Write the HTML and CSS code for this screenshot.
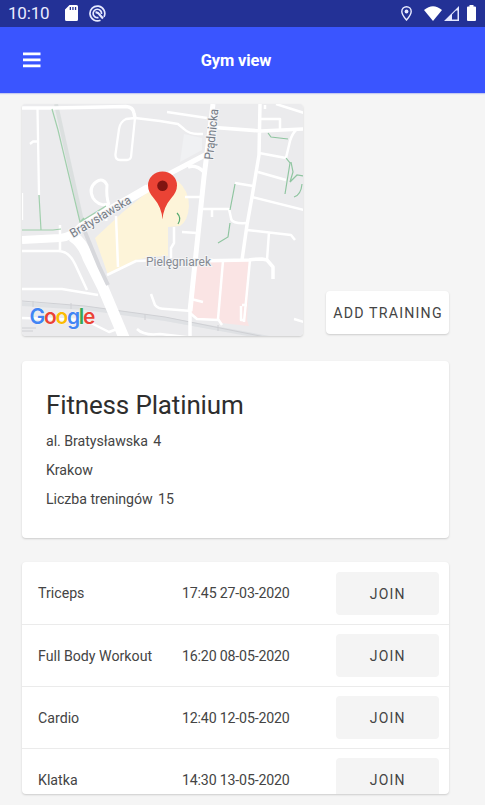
FILE: index.html
```html
<!DOCTYPE html>
<html lang="pl">
<head>
<meta charset="utf-8">
<title>Gym view</title>
<link rel="stylesheet" href="styles.css">
</head>
<body>
<div class="status">
  <span class="clock">10:10</span>
  <svg class="sd" width="13" height="16" viewBox="0 0 13 16"><path fill="#fff" fill-rule="evenodd" d="M4.500 0H11.500Q13 0 13 1.500V14.500Q13 16 11.500 16H1.500Q0 16 0 14.500V4.500ZM4.700 2V5H6V2ZM7.300 2V5H8.600V2ZM9.900 2V5H11.200V2Z"/></svg>
  <svg class="sync" width="17" height="17" viewBox="0 0 17 17" fill="none" stroke="#e6e9ff"><path stroke-width="1.700" d="M11.500 15.200A7.400 7.400 0 1 1 15 11.800"/><path stroke-width="1.700" d="M9.500 12.500A4.200 4.200 0 1 1 12.500 9"/><path stroke-width="2.200" d="M6.500 7.500Q9 7 10.500 9.500L14 13.500"/></svg>
  <span class="spacer"></span>
  <svg class="loc" width="11" height="15" viewBox="0 0 11 15"><path fill="none" stroke="#e9ebff" stroke-width="1.400" d="M5.500 14C2.500 10.500.8 8 .8 5.400a4.700 4.700 0 0 1 9.400 0C10.200 8 8.500 10.500 5.500 14Z"/><circle cx="5.500" cy="5.500" r="1.900" fill="#e9ebff"/></svg>
  <svg class="wifi" width="18" height="15" viewBox="0 0 18 15"><path fill="#fff" d="M0 4Q9-3.600 18 4L9 15Z"/></svg>
  <svg class="signal" width="15" height="15" viewBox="0 0 15 15"><path fill="#e5e8ff" fill-rule="evenodd" d="M15 0V15H0ZM13.500 4.500H12L8 8.500V13.500H13.500Z"/></svg>
  <svg class="battery" width="9" height="16" viewBox="0 0 9 16"><path fill="#fff" d="M2.500 0H6.500V1.500H8Q9 1.500 9 2.500V15Q9 16 8 16H1Q0 16 0 15V2.500Q0 1.500 1 1.500H2.500Z"/></svg>
</div>
<header class="bar">
  <svg class="menu" width="18" height="16" viewBox="0 0 18 16"><path fill="#fff" d="M0 .5H17.500V3.200H0ZM0 6.500H17.500V9.200H0ZM0 12.500H17.500V15.200H0Z"/></svg>
  <h1>Gym view</h1>
</header>
<main>
  <section class="top">
    <svg class="map" width="281" height="232" viewBox="22 104 281 232">
      <rect x="22" y="104" width="282" height="233" fill="#ebebed"/>
      <path fill="#f0f1f3" d="M184 134L202 138 202 150 180 162Z"/>
      <path fill="#fdf4d9" d="M95 238L123 212 150 190 178 181Q189 191 189 206 188 221 180 226L168 227V256L150 257 136 260 108 275Z"/>
      <path fill="#fae4e4" d="M195 261L250 260 247 320 249 326 221 323 217 319 197 319 191 312Z"/>
      <path fill="none" stroke="#dfe1e4" stroke-width="4" d="M22 304L85 308 165 319 220 329 275 339"/>
      <path fill="none" stroke="#cfd0d4" stroke-width="1" d="M22 301L85 306 165 317 220 328 265 337M33 301V307M71 303V309M145 314V320M218 325V331M22 328H36M22 331H33"/>
      <path fill="none" stroke="#dbdfdf" stroke-width="4" d="M56 104L82 221"/>
      <g fill="none" stroke="#fff" stroke-linejoin="round">
        <path stroke-width="3.500" d="M22 108H54L126 106.500Q133 107 134 113L135 118"/>
        <path stroke-width="2.300" d="M135 118L131 157Q130 160 127 160H120Q115 160 115.500 154L119 129Q120 122 126 119L135 118 160 121 178 124 184 129Q189 134 198 134H203M37.500 109L39 195M30 144L33 141.500H38M22 193V220"/>
        <path stroke-width="3" d="M106 221V203M109 205Q98 206 93 198 88 188 96 182 103 177 107 185 106 197 109 205"/>
        <path stroke-width="8" d="M22 240L60 238Q72 237 82 226L148 188"/>
        <path stroke-width="5" d="M145 189L165 176 205 155"/>
        <path stroke-width="11" d="M72 236Q83 243 88 258L103 288 125 340"/>
        <path stroke-width="2.500" d="M116 216L118 267M107 275L136 261 160 260M60 225V250M22 251H58Q69 251 75 264L87 290M22 289H62L98 295M22 318L85 320 109 332 117 329M151 294L155 305Q158 309 166 309L191 311M137 329Q144 336 160 334L195 338M174 227V243L171 248V258M182 232L197 233"/>
        <path stroke-width="5" d="M213 104L208 145 204 177 199 225 190 311"/>
        <path stroke-width="3.500" d="M188 167Q196 164 204 172M208 127L261 131 304 129M260 104L259 155 252 197 247 225 242 260M190 311V338M193 261L249 260Q255 259 262 259L267 260 273 267V279"/>
        <path stroke-width="2.500" d="M167 112L207 118M260 119H280V131M265 105V109M276 104L304 113M259 153L286 158 290 141Q292 134 296 130M258 172L286 180M235 183L253 186M252 197L304 210M185 197H202M202 209H229L231 218Q231 224 247 223M212 210V217M247 230L291 235 295 240M269 232L267 260M223 261L218 319 222 325M250 260L244 322M242 305H247M241 306V320H245M191 299L203 302M190 313L197 319 218 320M294 319L304 322"/>
      </g>
      <g fill="none" stroke="#a0cfac" stroke-width="1.200">
        <path d="M52 109L58 130 80 222 106 206M39 195L41 230M22 230H53L61 229M80 222L84 218"/>
        <path stroke="#8fc5a0" d="M235 184L230 210M268 133L271 137 288 139M230 223L228 237 218 243M286 158L290 163 285 194M291 162L293 172 290 182 297 175 304 176M302 184Q301 195 294 197"/>
        <path stroke="#55ab70" d="M177 213Q182 218 178 224"/>
      </g>
      <path fill="none" stroke="#d7d8dc" stroke-width="4" d="M85 232L99 266 108 285"/>
      <g class="road-label">
        <text transform="translate(73 238) rotate(-31)" textLength="69" lengthAdjust="spacingAndGlyphs">Bratysławska</text>
        <text transform="translate(213 160) rotate(-84)" textLength="51" lengthAdjust="spacingAndGlyphs">Prądnicka</text>
        <text class="area" x="146" y="266" textLength="65" lengthAdjust="spacingAndGlyphs">Pielęgniarek</text>
      </g>
      <path fill="#ea4335" d="M162.500 219.500Q161.500 207 154 198.500 148 192 148 185.500A14.500 14 0 0 1 177 185.500Q177 192 171 198.500 163.500 207 162.500 219.500Z"/>
      <circle cx="162.500" cy="185.800" r="5.300" fill="#811411"/>
      <text class="google" x="29.500" y="324"><tspan fill="#4285f4">G</tspan><tspan fill="#ea4335">o</tspan><tspan fill="#fbbc05">o</tspan><tspan fill="#4285f4">g</tspan><tspan fill="#34a853">l</tspan><tspan fill="#ea4335">e</tspan></text>
    </svg>
    <button class="btn add">ADD TRAINING</button>
  </section>
  <section class="card info">
    <h2>Fitness Platinium</h2>
    <p>al. Bratysławska <span class="value">4</span></p>
    <p>Krakow</p>
    <p>Liczba treningów <span class="value">15</span></p>
  </section>
  <section class="card list">
    <div class="row"><span class="name">Triceps</span><span class="date">17:45 27-03-2020</span><button class="btn">JOIN</button></div>
    <div class="row"><span class="name">Full Body Workout</span><span class="date">16:20 08-05-2020</span><button class="btn">JOIN</button></div>
    <div class="row"><span class="name">Cardio</span><span class="date">12:40 12-05-2020</span><button class="btn">JOIN</button></div>
    <div class="row"><span class="name">Klatka</span><span class="date">14:30 13-05-2020</span><button class="btn">JOIN</button></div>
  </section>
</main>
</body>
</html>
```
FILE: styles.css
```css
* { box-sizing: border-box; }
body {
  margin: 0;
  height: 805px;
  overflow: hidden;
  background: #f5f5f5;
  color: #444;
  font: 14.200px/20px Roboto, sans-serif;
}
h1, h2, p { margin: 0; }
svg { display: block; flex: none; }
.status {
  display: flex;
  align-items: center;
  height: 27px;
  padding: 0 9px 1px 8px;
  background: #233196;
}
.clock { width: 57px; color: #e9ebff; font-size: 17px; letter-spacing: -0.200px; }
.sync { margin-left: 11px; }
.spacer { flex: 1; }
.wifi { margin-left: 12px; }
.signal { margin-left: 2px; margin-top: 1px; }
.battery { margin-left: 8px; }
.bar {
  display: grid;
  grid-template-columns: 60px 1fr 74px;
  align-items: center;
  height: 66px;
  background: #3a55ff;
  box-shadow: 0 1px 1px #c5caf0;
}
.menu { margin: 0 0 0 23px; }
h1 {
  padding-left: 1px;
  margin-top: 2px;
  color: #fff;
  font-size: 16.500px;
  font-weight: 700;
  letter-spacing: -0.150px;
  text-align: center;
}
main { width: 449px; padding: 11px 0 0 22px; }
.top { display: flex; align-items: flex-end; justify-content: space-between; }
.map { border-radius: 4px; box-shadow: 0 1px 2px #ccc; }
.road-label { font-size: 12.500px; fill: #747b85; stroke: #f4f4f5; stroke-width: 2px; paint-order: stroke; }
.area { fill: #858a92; }
.google {
  font-family: Inter, sans-serif;
  font-size: 21px;
  font-weight: 600;
  letter-spacing: -1.300px;
  stroke: #fff;
  stroke-width: 0.500px;
  paint-order: stroke;
}
.btn {
  height: 43px;
  border: 0;
  border-radius: 4px;
  background: #f4f4f4;
  color: #444;
  font: 14.200px Roboto, sans-serif;
  letter-spacing: 1.200px;
  padding: 1px 0 0 1px;
}
.add {
  width: 123px;
  margin-bottom: 2px;
  background: #fff;
  box-shadow: 0 1px 2px #ccc;
}
.card {
  border-radius: 4px;
  background: #fff;
  box-shadow: 0 1px 2px #ccc;
}
.info { height: 177px; margin-top: 25px; padding: 24px; }
h2 { height: 46px; color: #2e2e2e; font-size: 26px; font-weight: 400; line-height: 41px; letter-spacing: -0.150px; }
.info p { height: 29px; line-height: 20px; letter-spacing: -0.050px; }
.value { margin-left: 2px; }
.list { height: 232px; margin-top: 24px; overflow: hidden; }
.row {
  display: grid;
  grid-template-columns: 144px 153.500px 103.500px;
  align-items: center;
  height: 62px;
  padding-left: 16px;
  border-bottom: 1px solid #ebebeb;
}
.row:first-child { height: 63px; }
.date { letter-spacing: -0.180px; }
.row .btn { font-size: 14px; letter-spacing: 1.200px; }
```
